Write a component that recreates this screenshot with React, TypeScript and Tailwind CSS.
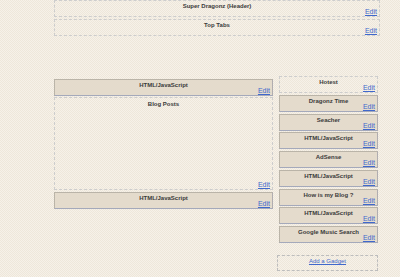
import React from "react";

const FONT = "font-['Liberation_Sans',Arial,sans-serif]";

function Edit({ className = "" }: { className?: string }) {
  return (
    <div
      className={`self-end text-[7px] leading-[7px] text-[#4068cc] underline ${className}`}
    >
      Edit
    </div>
  );
}

function Widget({
  title,
  filled,
  className = "",
  edit = "mr-[2px]",
}: {
  title: string;
  filled?: boolean;
  className?: string;
  edit?: string;
}) {
  return (
    <div
      className={`flex flex-col h-[17px] ${
        filled
          ? "bg-[#e4dbcc] border border-[#bab4a8] border-b-[#a4a9bb] border-r-[#b0adb0]"
          : "border border-dashed border-[#cdcdcd]"
      } ${className}`}
    >
      <div className="text-center text-[6px] font-bold text-[#3a3a3a] leading-[7px] pt-[2px]">
        {title}
      </div>
      <Edit className={`-mt-[2px] ${edit}`} />
    </div>
  );
}

export default function App() {
  const side = [
    "Dragonz Time",
    "Seacher",
    "HTML/JavaScript",
    "AdSense",
    "HTML/JavaScript",
    "How is my Blog ?",
    "HTML/JavaScript",
    "Google Music Search",
  ];
  return (
    <div
      className={`w-[400px] h-[277px] overflow-hidden ${FONT} bg-[repeating-conic-gradient(#f6f1e9_0_25%,#eee7da_0_50%)] bg-[length:2px_2px]`}
    >
      <div className="ml-[54px] w-[326px] flex flex-col gap-[2px]">
        <Widget title="Super Dragonz (Header)" edit="mr-[2px]" />
        <Widget title="Top Tabs" edit="mr-[2px]" />
      </div>
      <div className="flex mt-[40px]">
        <div className="ml-[54px] w-[219px] pt-[3px] flex flex-col gap-[1px]">
          <Widget title="HTML/JavaScript" filled />
          <div className="h-[93px] border border-dashed border-[#cdcdcd] flex flex-col justify-between">
            <div className="text-center text-[6px] font-bold text-[#3a3a3a] leading-[7px] pt-[3px]">
              Blog Posts
            </div>
            <Edit className="mr-[2px] mb-[1px]" />
          </div>
          <Widget title="HTML/JavaScript" filled className="mt-[1px]" />
        </div>
        <div className="ml-[6px] w-[99px] flex flex-col">
          <div className="flex flex-col gap-[1.75px]">
            <Widget title="Hotest" />
            {side.map((t, i) => (
              <Widget key={i} title={t} filled />
            ))}
          </div>
          <div className="mt-[12px] -ml-[2px] h-[16px] border border-dashed border-[#bdbdbd] flex items-center justify-center">
            <span className="text-[6px] text-[#4068cc] underline leading-[7px] -mt-[3px]">
              Add a Gadget
            </span>
          </div>
        </div>
      </div>
    </div>
  );
}
